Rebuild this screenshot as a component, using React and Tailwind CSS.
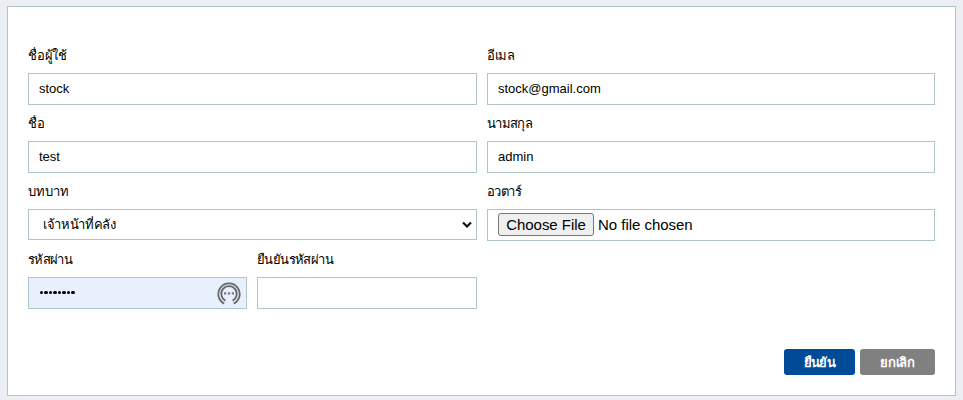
const control =
  "flex items-center border border-[#aec6c9] bg-white px-[10px] text-[13px] leading-none text-black";

function Field({ label, labelClass = "", className = "", children }) {
  return (
    <div className={`h-[58px] min-w-0 ${className}`}>
      <div className="h-[26px] text-[13px] leading-[18px] whitespace-nowrap text-black">
        <span className={labelClass}>{label}</span>
      </div>
      {children}
    </div>
  );
}

function TextBox({ value }) {
  return <div className={`${control} h-8 pb-[1px]`}>{value}</div>;
}

function PasswordIcon() {
  return (
    <svg className="h-6 w-6" viewBox="0 0 24 24" fill="none" stroke="#666769">
      <path d="M7.2 22.6A10.7 10.7 0 1 1 16.8 22.6" strokeWidth="1.8" />
      <path d="M8.4 19.6A7.7 7.7 0 1 1 15.6 19.6" strokeWidth="1.8" />
      <g fill="#77787a" stroke="none">
        <rect x="7" y="11.3" width="2.2" height="2.2" />
        <rect x="10.9" y="11.3" width="2.2" height="2.2" />
        <rect x="14.8" y="11.3" width="2.2" height="2.2" />
      </g>
    </svg>
  );
}

export default function App() {
  return (
    <div className="h-[400px] w-[963px] overflow-hidden bg-[#ebeff4] pt-[6px] pl-[7px] font-['Liberation_Sans',sans-serif]">
      <div className="h-[390px] w-[949px] border border-[#aec6c9] bg-white pt-[40px] pr-[20px] pl-[20px]">
        <div className="grid grid-cols-[449px_448px] gap-[10px]">
          <Field label="ชื่อผู้ใช้" labelClass="tracking-[-0.2px]"><TextBox value="stock" /></Field>
          <Field label="อีเมล" labelClass="tracking-[-0.5px]"><TextBox value="stock@gmail.com" /></Field>
          <Field label="ชื่อ" labelClass="tracking-[-0.3px]"><TextBox value="test" /></Field>
          <Field label="นามสกุล" labelClass="tracking-[-0.65px]"><TextBox value="admin" /></Field>
          <Field label="บทบาท" labelClass="tracking-[0.1px]">
            <div className={`${control} h-[31px] justify-between pr-[1px] pl-[14px]`}>
              <span className="tracking-[-0.35px]">เจ้าหน้าที่คลัง</span>
              <svg className="h-4 w-4" viewBox="0 0 16 16" fill="none" stroke="#111" strokeWidth="2.2">
                <path d="M4 5.5L8 9.5L12 5.5" />
              </svg>
            </div>
          </Field>
          <Field label="อวตาร์" labelClass="tracking-[-0.6px]">
            <div className={`${control} h-8 gap-1 pb-[1px] text-[15px]`}>
              <span className="flex h-[23px] w-[96px] items-center justify-center rounded-[3px] border border-[#767676] bg-[#efefef] tracking-[-0.03px]">
                Choose File
              </span>
              <span className="tracking-[-0.03px]">No file chosen</span>
            </div>
          </Field>
          <div className="flex gap-[10px]">
            <Field label="รหัสผ่าน" labelClass="tracking-[-0.65px]" className="w-[219px]">
              <div className="flex h-8 items-center justify-between border border-[#aec6c9] bg-[#e8f0fe] pr-[5px] pl-[10.5px]">
                <div className="flex gap-[1px] pb-[1px]">
                  {Array.from({ length: 8 }, (_, i) => (
                    <i key={i} className="h-[3.5px] w-[3.55px] rounded-full bg-black" />
                  ))}
                </div>
                <PasswordIcon />
              </div>
            </Field>
            <Field label="ยืนยันรหัสผ่าน" labelClass="tracking-[-0.6px]" className="w-[220px]"><TextBox value="" /></Field>
          </div>
        </div>
        <div className="mt-[40px] flex justify-end gap-[5px] text-[13px] leading-none font-bold text-white">
          <button className="h-[26px] w-[71px] rounded-[3px] bg-[#004b97] tracking-[-0.6px]">ยืนยัน</button>
          <button className="h-[26px] w-[75px] rounded-[3px] bg-[#808080] tracking-[-0.2px]">ยกเลิก</button>
        </div>
      </div>
    </div>
  );
}
